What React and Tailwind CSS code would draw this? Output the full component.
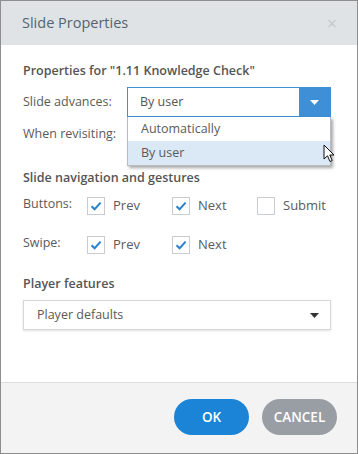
import { useState } from 'react'

function Check({ checked }) {
  return (
    <span className="flex h-[18px] w-[18px] shrink-0 items-center justify-center border border-[#c9cdd1] bg-white">
      {checked && (
        <svg width="12" height="10" viewBox="0 0 12 10">
          <path d="M1.5 5.2 L4.6 8.2 L10.6 1.6" fill="none" stroke="#2b82cc" strokeWidth="2" />
        </svg>
      )}
    </span>
  )
}

function CheckItem({ label, checked, w }) {
  return (
    <div className={`flex items-center gap-[8px] ${w}`}>
      <Check checked={checked} />
      <span className="text-[13px] text-[#5b5b5b]">{label}</span>
    </div>
  )
}

export default function App() {
  const [nav] = useState({ prev: true, next: true, submit: false })

  return (
    <div className="flex h-[454px] w-[358px] flex-col border border-[#8e8e8e] bg-white font-['Open_Sans',sans-serif] text-[12.5px] text-[#5a5a5a]">
      {/* Header */}
      <div className="flex h-[44px] shrink-0 items-center justify-between bg-[#dfe3e6] pl-[21px] pr-[20px]">
        <span className="text-[14.5px] text-[#556370]">Slide Properties</span>
        <span className="text-[18px] leading-none text-[#c4c9cd]">×</span>
      </div>

      {/* Body */}
      <div className="flex-1 pl-[22px] pr-[26px] pt-[17px]">
        <div className="font-semibold leading-[18px] text-[#555]">Properties for "1.11 Knowledge Check"</div>

        <div className="relative mt-[7px] flex h-[30px] items-center">
          <span className="w-[104px]">Slide advances:</span>
          <div className="flex h-[30px] flex-1 items-stretch border border-[#3e8fd6] bg-white">
            <span className="flex flex-1 items-center pl-[12px] text-[#555]">By user</span>
            <span className="flex w-[31px] items-center justify-center bg-[#3e8fd6]">
              <svg width="9" height="5" viewBox="0 0 9 5"><path d="M0 0 H9 L4.5 5 Z" fill="#fff" /></svg>
            </span>
          </div>
          {/* open list */}
          <div className="absolute left-[104px] right-0 top-[30px] z-10 border border-t-0 border-[#b8bcc0] bg-white shadow-[2px_2px_3px_rgba(0,0,0,0.35)]">
            <div className="flex h-[24px] items-center pl-[13px]">Automatically</div>
            <div className="flex h-[24px] items-center bg-[#dbe9f6] pl-[13px]">By user</div>
            <svg className="absolute right-[-6px] top-[27px]" width="13" height="20" viewBox="0 0 13 20">
              <path d="M1 1 V15 L4.5 11.8 L7 17.5 L9.2 16.5 L6.8 11 H11 Z" fill="#fff" stroke="#111" strokeWidth="1" strokeLinejoin="round" />
            </svg>
          </div>
        </div>

        <div className="mt-[2px] flex h-[30px] items-center">
          <span>When revisiting:</span>
        </div>

        <div className="mt-[20px] font-semibold leading-[18px] text-[#555]">Slide navigation and gestures</div>

        <div className="mt-[10px] flex h-[18px] items-center">
          <span className="w-[64px] self-start leading-[14px]">Buttons:</span>
          <CheckItem label="Prev" checked={nav.prev} w="w-[85px]" />
          <CheckItem label="Next" checked={nav.next} w="w-[85px]" />
          <CheckItem label="Submit" checked={nav.submit} w="" />
        </div>

        <div className="mt-[21px] flex h-[18px] items-center">
          <span className="w-[64px] self-start leading-[14px]">Swipe:</span>
          <CheckItem label="Prev" checked w="w-[85px]" />
          <CheckItem label="Next" checked w="w-[85px]" />
        </div>

        <div className="mt-[21px] font-semibold leading-[18px] text-[#555]">Player features</div>

        <div className="mt-[7px] flex h-[30px] items-center justify-between border border-[#d5d8db] bg-white pl-[13px] pr-[11px] shadow-[0_1px_2px_rgba(0,0,0,0.12)]">
          <span>Player defaults</span>
          <svg width="9" height="5" viewBox="0 0 9 5"><path d="M0 0 H9 L4.5 5 Z" fill="#333" /></svg>
        </div>
      </div>

      {/* Footer */}
      <div className="flex h-[71px] shrink-0 items-center justify-end gap-[13px] border-t border-[#d9dde0] bg-[#f3f3f3] pr-[20px] pb-[2px]">
        <button className="h-[36px] w-[75px] rounded-full bg-[#1b84d6] text-[13.5px] font-semibold text-white">OK</button>
        <button className="h-[36px] w-[75px] rounded-full bg-[#989ea4] text-[13.5px] font-semibold text-white">CANCEL</button>
      </div>
    </div>
  )
}
